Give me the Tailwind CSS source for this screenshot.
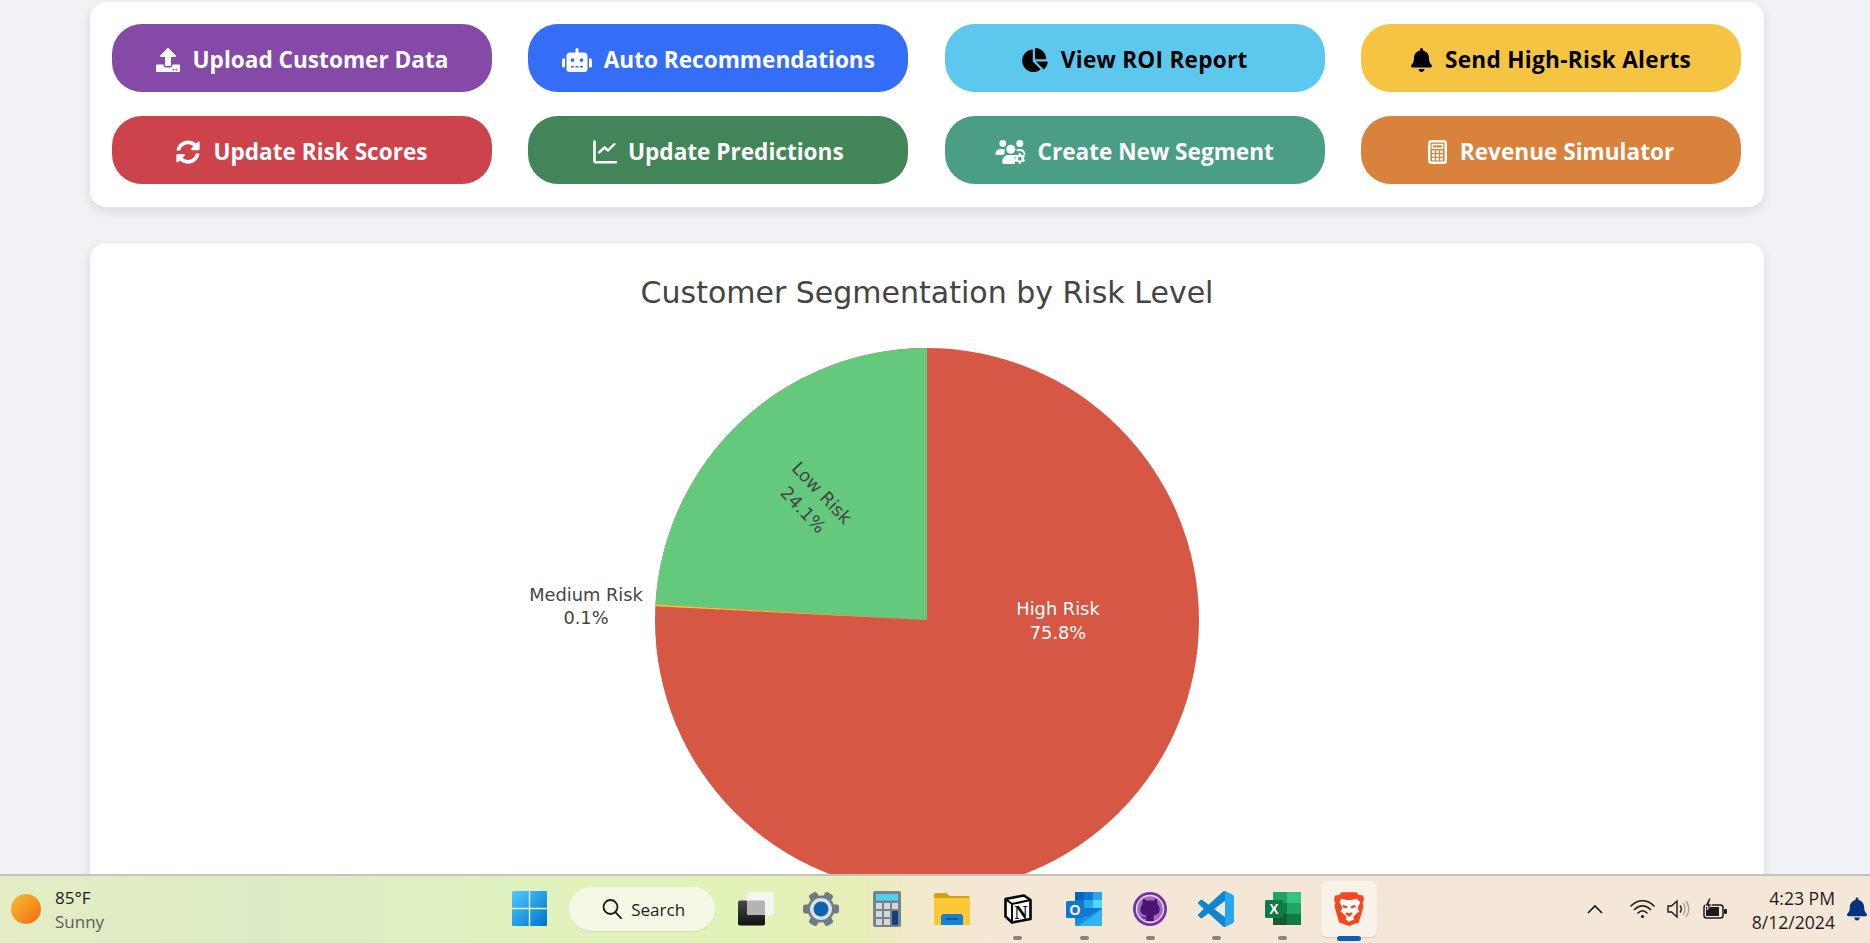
<!DOCTYPE html>
<html lang="en">
<head>
  <meta charset="UTF-8">
  <meta name="viewport" content="width=device-width, initial-scale=1.0">
  <title>Customer Segmentation</title>
  <script src="https://cdn.jsdelivr.net/npm/@tailwindcss/browser@4"></script>
</head>
<body class="h-screen overflow-hidden flex flex-col bg-[#f0f2f5] font-['Open_Sans',sans-serif]">

  <main class="flex-1 min-h-0 overflow-hidden pl-[90px] pr-[106px] pt-[2px]">
    <!-- action buttons -->
    <section class="bg-white rounded-2xl shadow-[0_4px_12px_rgba(0,0,0,0.1)] pl-[22px] pr-[23px] pt-[22px] pb-[23px] grid grid-cols-4 gap-x-[36.4px] gap-y-[24px] text-[22.6px] font-bold">
      <button class="h-[68px] pt-[3px] rounded-[30px] bg-[#8549a8] text-white flex items-center justify-center gap-[13px]">
        <svg class="w-6 h-6" viewBox="0 0 512 512" fill="currentColor"><path d="M296 384h-80c-13.3 0-24-10.7-24-24V192h-87.7c-17.8 0-26.7-21.5-14.1-34.1L242.3 5.7c7.5-7.5 19.8-7.5 27.3 0l152.2 152.2c12.6 12.6 3.7 34.1-14.1 34.1H320v168c0 13.3-10.7 24-24 24zm216-8v112c0 13.3-10.7 24-24 24H24c-13.3 0-24-10.7-24-24V376c0-13.3 10.7-24 24-24h136v8c0 30.9 25.1 56 56 56h80c30.9 0 56-25.1 56-56v-8h136c13.3 0 24 10.7 24 24zm-124 88c0-11-9-20-20-20s-20 9-20 20 9 20 20 20 20-9 20-20zm64 0c0-11-9-20-20-20s-20 9-20 20 9 20 20 20 20-9 20-20z"/></svg>
        Upload Customer Data
      </button>
      <button class="h-[68px] pt-[3px] rounded-[30px] bg-[#346ef6] text-white flex items-center justify-center gap-[12px]">
        <svg class="w-[30px] h-6" viewBox="0 0 640 512" fill="currentColor"><path d="M32,224H64V416H32A31.96166,31.96166,0,0,1,0,384V256A31.96166,31.96166,0,0,1,32,224Zm512-48V448a64.06328,64.06328,0,0,1-64,64H160a64.06328,64.06328,0,0,1-64-64V176a79.974,79.974,0,0,1,80-80H288V32a32,32,0,0,1,64,0V96H464A79.974,79.974,0,0,1,544,176ZM264,256a40,40,0,1,0-40,40A39.997,39.997,0,0,0,264,256Zm-8,128H192v32h64Zm96,0H288v32h64ZM456,256a40,40,0,1,0-40,40A39.997,39.997,0,0,0,456,256Zm-8,128H384v32h64ZM640,256V384a31.96166,31.96166,0,0,1-32,32H576V224h32A31.96166,31.96166,0,0,1,640,256Z"/></svg>
        Auto Recommendations
      </button>
      <button class="h-[68px] pt-[3px] rounded-[30px] bg-[#5dc8ee] text-black tracking-[0.24px] flex items-center justify-center gap-[13px]">
        <svg class="w-[26px] h-6" viewBox="0 0 544 512" fill="currentColor"><path d="M527.79 288H290.5l158.03 158.03c6.04 6.04 15.98 6.53 22.19.68 38.7-36.46 65.32-85.61 73.13-140.86 1.34-9.46-6.51-17.85-16.06-17.85zm-15.83-64.8C503.72 103.74 408.26 8.28 288.8.04 279.68-.59 272 7.1 272 16.24V240h223.77c9.14 0 16.82-7.68 16.19-16.8zM224 288V50.71c0-9.55-8.39-17.4-17.84-16.06C86.99 51.49-4.1 155.6.14 280.37 4.5 408.51 114.83 513.59 243.03 511.98c50.4-.63 96.97-16.87 135.26-44.03 7.9-5.6 8.42-17.23 1.57-24.08L224 288z"/></svg>
        View ROI Report
      </button>
      <button class="h-[68px] pt-[3px] rounded-[30px] bg-[#f5c443] text-black tracking-[0.3px] flex items-center justify-center gap-[13px]">
        <svg class="w-[21px] h-6" viewBox="0 0 448 512" fill="currentColor"><path d="M224 512c35.32 0 63.97-28.65 63.97-64H160.03c0 35.35 28.65 64 63.97 64zm215.39-149.71c-19.32-20.76-55.47-51.99-55.47-154.29 0-77.7-54.48-139.9-127.94-155.16V32c0-17.67-14.32-32-31.98-32s-31.98 14.33-31.98 32v20.84C118.56 68.1 64.08 130.3 64.08 208c0 102.3-36.15 133.53-55.47 154.29-6 6.45-8.66 14.16-8.61 21.71.11 16.4 12.98 32 32.1 32h383.8c19.12 0 32-15.6 32.1-32 .05-7.55-2.61-15.27-8.61-21.71z"/></svg>
        Send High-Risk Alerts
      </button>
      <button class="h-[68px] pt-[3px] rounded-[30px] bg-[#cc434b] text-white flex items-center justify-center gap-[13px]">
        <svg class="w-6 h-6" viewBox="0 0 512 512" fill="currentColor"><path d="M370.72 133.28C339.458 104.008 298.888 87.962 255.848 88c-77.458.068-144.328 53.178-162.791 126.85-1.344 5.363-6.122 9.15-11.651 9.15H24.103c-7.498 0-13.194-6.807-11.807-14.176C33.933 94.924 134.813 8 256 8c66.448 0 126.791 26.136 171.315 68.685L463.03 40.97C478.149 25.851 504 36.559 504 57.941V192c0 13.255-10.745 24-24 24H345.941c-21.382 0-32.09-25.851-16.971-40.971l41.75-41.749zM32 296h134.059c21.382 0 32.09 25.851 16.971 40.971l-41.75 41.75c31.262 29.273 71.835 45.319 114.876 45.28 77.418-.07 144.315-53.144 162.787-126.849 1.344-5.363 6.122-9.15 11.651-9.15h57.304c7.498 0 13.194 6.807 11.807 14.176C478.067 417.076 377.187 504 256 504c-66.448 0-126.791-26.136-171.315-68.685L48.97 471.03C33.851 486.149 8 475.441 8 454.059V320c0-13.255 10.745-24 24-24z"/></svg>
        Update Risk Scores
      </button>
      <button class="h-[68px] pt-[3px] rounded-[30px] bg-[#428559] text-white flex items-center justify-center gap-[11px]">
        <svg class="w-6 h-6" viewBox="0 0 24 24" fill="none" stroke="currentColor" stroke-linecap="round" stroke-linejoin="round"><path stroke-width="2.600" d="M1.500 1.500v19.200a1.500 1.500 0 0 0 1.500 1.500h20"/><path stroke-width="2.400" d="M6 12.500l5.500-5 3.500 3L21.500 4"/></svg>
        Update Predictions
      </button>
      <button class="h-[68px] pt-[3px] rounded-[30px] bg-[#4a9e85] text-white flex items-center justify-center gap-[11px]">
        <svg class="w-[31px] h-6" viewBox="0 0 30 24" fill="currentColor">
          <circle cx="7.300" cy="3.400" r="3.400"/><circle cx="24.300" cy="3.400" r="3.500"/><circle cx="15.300" cy="9.300" r="4.500"/>
          <path d="M1 15c-.7 0-1-.4-1-1 0-2.800 2-4.800 4.500-4.800h3.300c.7 0 1.300.2 1.800.5-.8 1.200-.9 3-.5 4.300-1.200.3-2 .6-2.600 1z"/>
          <path d="M6.700 22.500c0-4.200 2.600-7.500 5.800-7.500h6c.6 0 .9.1 1.300.3-.8.800-1 1.800-.6 2.400l.9.800c-.4.800-.4 1.600 0 2.300l-.8.800c-.3.600-.1 1.500.4 2.400H8.200c-.8 0-1.500-.7-1.500-1.500z"/>
          <path d="M21 9.500c1-.4 1.700-.4 3-.4 3 0 6 2 6 5.600l-1.700-.2c-.1-2.200-2-3.600-4.300-3.600-1.200 0-2 .1-2.700.5z"/>
          <path d="M23.300 13h2l.4 1.500 1.300.7 1.500-.4 1 1.700-1.100 1.100v1.500l1.100 1.100-1 1.700-1.500-.4-1.300.7-.4 1.500h-2l-.4-1.500-1.300-.7-1.500.4-1-1.700 1.100-1.100v-1.500l-1.100-1.100 1-1.700 1.500.4 1.300-.7zm1 3.800a1.900 1.900 0 1 0 0 3.800 1.900 1.900 0 0 0 0-3.800z"/>
        </svg>
        Create New Segment
      </button>
      <button class="h-[68px] pt-[3px] rounded-[30px] bg-[#d8823b] text-white flex items-center justify-center gap-[13px]">
        <svg class="w-[19px] h-6" viewBox="0 0 19 24" fill="none" stroke="currentColor">
          <rect x="1.200" y="1.200" width="16.600" height="21.600" rx="2" stroke-width="2.400"/>
          <rect x="4.400" y="4.600" width="10.200" height="3.600" stroke-width="1.500"/>
          <g fill="currentColor" stroke="none">
            <rect x="4" y="10.500" width="2.800" height="2.500"/><rect x="8.100" y="10.500" width="2.800" height="2.500"/><rect x="12.200" y="10.500" width="2.800" height="2.500"/>
            <rect x="4" y="14.200" width="2.800" height="2.500"/><rect x="8.100" y="14.200" width="2.800" height="2.500"/><rect x="12.200" y="14.200" width="2.800" height="2.500"/>
            <rect x="4" y="17.900" width="2.800" height="2.500"/><rect x="8.100" y="17.900" width="2.800" height="2.500"/><rect x="12.200" y="17.900" width="2.800" height="2.500"/>
          </g>
        </svg>
        Revenue Simulator
      </button>
    </section>

    <!-- pie chart -->
    <section class="mt-[36px] bg-white rounded-2xl shadow-[0_4px_12px_rgba(0,0,0,0.1)] h-[800px]">
      <svg class="block font-['DejaVu_Sans',sans-serif]" width="1674" height="700" viewBox="0 0 1674 700">
        <text x="837" y="60" text-anchor="middle" font-size="30" fill="#444">Customer Segmentation by Risk Level</text>
        <circle cx="837" cy="377" r="272" fill="#d75745"/>
        <path d="M837 377 L837 105 A272 272 0 0 0 565.4 361.6 Z" fill="#64c97c"/>
        <path d="M837 377 L565.4 361.6 A272 272 0 0 0 565.34 363.3 Z" fill="#f4c542"/>
        <g font-size="17.8" text-anchor="middle" fill="#444">
          <text x="968" y="372" fill="#fff">High Risk</text>
          <text x="968" y="396" fill="#fff">75.8%</text>
          <text x="496" y="358">Medium Risk</text>
          <text x="496" y="381">0.1%</text>
          <text transform="translate(731.7 250) rotate(46.6) translate(0 6)">Low Risk</text>
          <text transform="translate(713 267) rotate(46.6) translate(0 6)">24.1%</text>
        </g>
      </svg>
    </section>
  </main>

  <!-- windows taskbar -->
  <footer class="h-[69px] shrink-0 border-t-2 border-[#c3c4bf] pb-[2px] flex items-center relative bg-[linear-gradient(90deg,#e4edc4_0%,#dcebc6_14%,#e0f3bc_30%,#e2f3b8_40%,#e8eeb8_46%,#f2e9cc_49%,#f5e7d6_54%,#f5e7d8_100%)]">
    <div class="w-[496.75px] shrink-0 flex items-center pl-[11px] gap-[14px]">
      <div class="w-[30px] h-[30px] rounded-full bg-[linear-gradient(135deg,#f5c032,#f56a10)]"></div>
      <div class="leading-[24px] pt-[3px] text-[17px]">
        <div class="text-[#1c1c1c]">85°F</div>
        <div class="text-[#5c5c5c]">Sunny</div>
      </div>
    </div>

    <div class="w-[65.5px] h-[56px] shrink-0 flex items-center justify-center">
      <svg class="w-[35px] h-[35px]" viewBox="0 0 35 35">
        <defs><linearGradient id="winG" x1="0" y1="0" x2="1" y2="1"><stop offset="0" stop-color="#4fcbfb"/><stop offset="1" stop-color="#0071cf"/></linearGradient></defs>
        <path fill="url(#winG)" d="M1 0h15.800v16.800H0V1a1 1 0 0 1 1-1zM18.200 0H34a1 1 0 0 1 1 1v15.800H18.200zM0 18.200h16.800V35H1a1 1 0 0 1-1-1zM18.200 18.200H35V34a1 1 0 0 1-1 1H18.200z"/>
      </svg>
    </div>

    <div class="ml-[7px] w-[146px] h-[44px] shrink-0 rounded-full bg-[#f4f9e6] flex items-center pl-[32px] gap-[8px] shadow-[0_1px_1px_rgba(0,0,0,0.08)]">
      <svg class="w-[22px] h-[22px] shrink-0" viewBox="0 0 22 22" fill="none" stroke="#1a1a1a" stroke-width="1.800" stroke-linecap="round"><circle cx="9.500" cy="9" r="7"/><path d="M14.600 14.300l5.400 5.900"/></svg>
      <span class="text-[17px] pt-[2px] text-[#222]">Search</span>
    </div>

    <div class="ml-[7.5px] w-[65.5px] shrink-0 flex items-center justify-center">
      <svg class="w-[36px] h-[34px]" viewBox="0 0 36 34">
        <defs><linearGradient id="tvDark" x1="0" y1="0" x2="0" y2="1"><stop offset="0" stop-color="#4a4a4a"/><stop offset="1" stop-color="#111"/></linearGradient></defs>
        <rect x="0" y="8.500" width="27" height="25" rx="2" fill="url(#tvDark)"/>
        <rect x="9" y="0" width="27" height="23" rx="2" fill="#f5f5f2"/>
        <rect x="9" y="8.500" width="18" height="14.500" rx="1.500" fill="#b4b4b2"/>
      </svg>
    </div>
    <div class="w-[65.5px] shrink-0 flex items-center justify-center">
      <svg class="w-[36px] h-[34px]" viewBox="0 0 36 34">
        <g fill="#6f7a85">
          <circle cx="18" cy="17" r="13.500"/>
          <rect x="0" y="12.500" width="36" height="9" rx="2.500"/>
          <rect x="0" y="12.500" width="36" height="9" rx="2.500" transform="rotate(60 18 17)"/>
          <rect x="0" y="12.500" width="36" height="9" rx="2.500" transform="rotate(120 18 17)"/>
        </g>
        <circle cx="18" cy="17" r="11" fill="#d8e0e6"/>
        <circle cx="18" cy="17" r="7.500" fill="#0f63ad"/>
      </svg>
    </div>
    <div class="w-[65.5px] shrink-0 flex items-center justify-center">
      <svg class="w-[28px] h-[36px]" viewBox="0 0 28 36">
        <rect width="28" height="36" rx="2" fill="#76828c"/>
        <rect x="3" y="3" width="22" height="6.500" fill="#4fd0f0"/>
        <g fill="#d3d8da"><rect x="3" y="12" width="6" height="6"/><rect x="11" y="12" width="6" height="6"/><rect x="19" y="12" width="6" height="6"/><rect x="3" y="20" width="6" height="6"/><rect x="11" y="20" width="6" height="6"/><rect x="3" y="28" width="6" height="6"/><rect x="11" y="28" width="6" height="6"/></g>
        <rect x="19" y="20" width="6" height="14" fill="#123f7d"/>
      </svg>
    </div>
    <div class="w-[65.5px] shrink-0 flex items-center justify-center">
      <svg class="w-[36px] h-[32px]" viewBox="0 0 36 32">
        <path fill="#d69f17" d="M0 2a2 2 0 0 1 2-2h10l4 3h18a2 2 0 0 1 2 2v5H0z"/>
        <path fill="#fcc836" d="M0 5h36v26a1 1 0 0 1-1 1H0z"/>
        <path fill="#1282d8" d="M7 32v-8a3 3 0 0 1 3-3h16a3 3 0 0 1 3 3v8z"/>
        <rect x="12" y="25" width="12" height="1.600" fill="#0d4f8a"/>
      </svg>
    </div>
    <div class="w-[66.2px] h-[36px] shrink-0 flex items-center justify-center relative">
      <svg class="w-[28px] h-[30px]" viewBox="0 0 28 30">
        <path fill="#fff" stroke="#000" stroke-width="2.600" stroke-linejoin="round" d="M1.500 5L20 1.500l6.500 4.500V25L8 28.500l-6.500-6z"/>
        <path fill="none" stroke="#000" stroke-width="2" d="M1.500 5l6.500 5 18.500-4M8 10v18.500"/>
        <text x="17" y="25" text-anchor="middle" font-family="Liberation Serif, serif" font-size="18" font-weight="700" fill="#000">N</text>
      </svg>
      <span class="absolute left-[28.6px] top-[45px] w-[9px] h-[4px] rounded-full bg-[#8b8478]"></span>
    </div>
    <div class="w-[66.2px] h-[36px] shrink-0 flex items-center justify-center relative">
      <svg class="w-[36px] h-[34px]" viewBox="0 0 36 34">
        <rect x="9" y="0" width="9" height="8" fill="#0364b8"/><rect x="18" y="0" width="9" height="8" fill="#0a78d4"/><rect x="27" y="0" width="9" height="8" fill="#28a8ea"/>
        <rect x="9" y="8" width="9" height="8" fill="#0078d4"/><rect x="18" y="8" width="9" height="8" fill="#28a8ea"/><rect x="27" y="8" width="9" height="8" fill="#50d9ff"/>
        <path fill="#0f78d4" d="M9 16h27v1L21 26 9 19z"/>
        <path fill="#1490df" d="M9 18l12 8 15-9v15.500a1.500 1.500 0 0 1-1.500 1.500h-24A1.500 1.500 0 0 1 9 32.500z"/>
        <path fill="#35b3ee" d="M36 17.500v15a1.500 1.500 0 0 1-1.500 1.500H12z"/>
        <rect x="0" y="9" width="18" height="17" rx="1.500" fill="#0f78d4"/>
        <text x="9" y="23" text-anchor="middle" font-family="Liberation Sans, sans-serif" font-size="14" font-weight="700" fill="#fff">O</text>
      </svg>
      <span class="absolute left-[28.6px] top-[45px] w-[9px] h-[4px] rounded-full bg-[#8b8478]"></span>
    </div>
    <div class="w-[66.2px] h-[36px] shrink-0 flex items-center justify-center relative">
      <svg class="w-[34px] h-[34px]" viewBox="0 0 34 34">
        <circle cx="17" cy="17" r="17" fill="#7d30a3"/>
        <circle cx="17" cy="17" r="13.500" fill="#a06ac4" stroke="#e8dcef" stroke-width="1.400"/>
        <path fill="#4a1570" d="M10.500 6.500l3.500 2.200q3-1 6 0l3.500-2.200q1.500 3.200 1 5.500 2.200 2 2.200 5.200 0 5.300-6 6.300v5.500h-7.400v-2.700c-3 1-4.300-1-5.300-2.500 1 0 2.300 1.500 3.300 1.500h2v-1.800c-5.500-1-6-4.300-6-6.300q0-3.200 2.200-5.200-.5-2.300 1-5.500z"/>
      </svg>
      <span class="absolute left-[28.6px] top-[45px] w-[9px] h-[4px] rounded-full bg-[#8b8478]"></span>
    </div>
    <div class="w-[66.2px] h-[36px] shrink-0 flex items-center justify-center relative">
      <svg class="w-[36px] h-[36px]" viewBox="0 0 24 24"><path fill="#0f85d1" d="M23.150 2.587L18.210.21a1.494 1.494 0 0 0-1.705.29l-9.460 8.630-4.120-3.128a.999.999 0 0 0-1.276.057L.327 7.261A1 1 0 0 0 .326 8.740L3.899 12 .326 15.260a1 1 0 0 0 .001 1.479L1.650 17.940a.999.999 0 0 0 1.276.057l4.120-3.128 9.460 8.630a1.492 1.492 0 0 0 1.704.29l4.942-2.377A1.500 1.500 0 0 0 24 20.060V3.939a1.500 1.500 0 0 0-.85-1.352zm-5.146 14.861L10.826 12l7.178-5.448v10.896z"/><path fill="#24a6f0" d="M18.004.07l5.146 2.517A1.500 1.500 0 0 1 24 3.939V20.060a1.500 1.500 0 0 1-.85 1.352l-5.146 2.517z"/></svg>
      <span class="absolute left-[28.6px] top-[45px] w-[9px] h-[4px] rounded-full bg-[#8b8478]"></span>
    </div>
    <div class="w-[66.2px] h-[36px] shrink-0 flex items-center justify-center relative">
      <svg class="w-[36px] h-[33px]" viewBox="0 0 36 33">
        <rect x="8" y="0" width="14" height="11" fill="#21a366"/><rect x="22" y="0" width="14" height="11" fill="#33c481"/>
        <rect x="8" y="11" width="14" height="11" fill="#107c41"/><rect x="22" y="11" width="14" height="11" fill="#21a366"/>
        <rect x="8" y="22" width="14" height="11" fill="#185c37"/><rect x="22" y="22" width="14" height="11" fill="#107c41"/>
        <rect x="0" y="8" width="18" height="18" rx="1.500" fill="#0f7a45"/>
        <text x="9" y="22" text-anchor="middle" font-family="Liberation Sans, sans-serif" font-size="14" font-weight="700" fill="#fff">X</text>
      </svg>
      <span class="absolute left-[28.6px] top-[45px] w-[9px] h-[4px] rounded-full bg-[#8b8478]"></span>
    </div>
    <div class="w-[66.2px] shrink-0 flex items-center justify-center relative">
      <div class="w-[56px] h-[56px] rounded-md bg-[#f9f2e8] shadow-[0_1px_1px_rgba(0,0,0,0.12)] flex items-center justify-center">
        <svg class="w-[30px] h-[34px]" viewBox="0 0 32 36">
          <path fill="#f6481f" d="M8 0h16l2.500 3L31 3.500l1 5-1.500 2.500 1 4-5 17.500L16 36 5.500 32.500.5 15l1-4L0 8.500l1-5L5.500 3z"/>
          <path fill="#fff" d="M8 7l5.500 1.500h5L24 7l4 3.500-3 7 2 3-4.500 3.500-2 3 1 2L16 31.500 12.500 29l1-2-2-3L7 20.500l2-3-3-7z"/>
          <path fill="#f6481f" d="M13.500 21.500l2.500 1 2.500-1 1.500 1.500-4 3.500-4-3.500zM9.500 13.500l5 1.500-1 2.500-4.500-1.500zM22.500 13.500l-5 1.500 1 2.500 4.500-1.500z"/>
        </svg>
      </div>
      <span class="absolute left-[21px] top-[55px] w-[24px] h-[5px] rounded-full bg-[#0a5fb8]"></span>
    </div>

    <div class="flex-1"></div>

    <svg class="w-[16px] h-[10px] mr-[27px]" viewBox="0 0 16 10" fill="none" stroke="#1a1a1a" stroke-width="1.600"><path d="M1 9l7-7 7 7"/></svg>
    <svg class="w-[25px] h-[20px] mr-[12px]" viewBox="0 0 25 20" fill="none" stroke="#1a1a1a" stroke-width="1.600" stroke-linecap="round"><path d="M1 7c7-7 16-7 23 0M4.500 10.500c5-5 11-5 16 0M8 14c3-3 6-3 9 0"/><circle cx="12.500" cy="17.500" r="1.600" fill="#1a1a1a" stroke="none"/></svg>
    <svg class="w-[24px] h-[20px] mr-[12px]" viewBox="0 0 24 20" fill="none" stroke-width="1.400"><path stroke="#1a1a1a" d="M1 7v6h3.500L10 18V2L4.500 7z"/><path stroke="#1a1a1a" d="M13 6.500c1.500 2 1.500 5 0 7"/><path stroke="#a5a39c" d="M16 4c2.500 3.500 2.500 8.500 0 12M19 2c3.500 5 3.500 11 0 16"/></svg>
    <svg class="w-[25px] h-[22px] mr-[24px]" viewBox="0 0 25 22"><rect x="1" y="7" width="19" height="13" rx="2.500" fill="none" stroke="#1a1a1a" stroke-width="1.500"/><rect x="3" y="9" width="13" height="9" fill="#1a1a1a"/><rect x="21" y="11" width="3" height="5" rx="1" fill="#1a1a1a"/><path d="M6 0L2 8h3l-1 4 5-6H6l2-6z" fill="#1a1a1a" stroke="#f5e7d8" stroke-width=".8"/></svg>

    <div class="text-right text-[17.6px] leading-[24px] pt-[3px] text-[#1c1c1c] mr-[12px]">
      <div>4:23 PM</div>
      <div>8/12/2024</div>
    </div>
    <svg class="w-[20px] h-[24px] mr-[3px]" viewBox="0 0 448 512" fill="#06337f"><path d="M224 512c35.320 0 63.970-28.650 63.970-64H160.030c0 35.350 28.650 64 63.970 64zm215.390-149.710c-19.320-20.760-55.470-51.990-55.470-154.290 0-77.700-54.480-139.900-127.940-155.160V32c0-17.670-14.320-32-31.980-32s-31.980 14.330-31.980 32v20.840C118.560 68.100 64.080 130.300 64.080 208c0 102.300-36.150 133.530-55.470 154.290-6 6.450-8.660 14.160-8.61 21.710.11 16.400 12.980 32 32.100 32h383.800c19.120 0 32-15.600 32.100-32 .05-7.550-2.610-15.270-8.610-21.710z"/></svg>
  </footer>
</body>
</html>
